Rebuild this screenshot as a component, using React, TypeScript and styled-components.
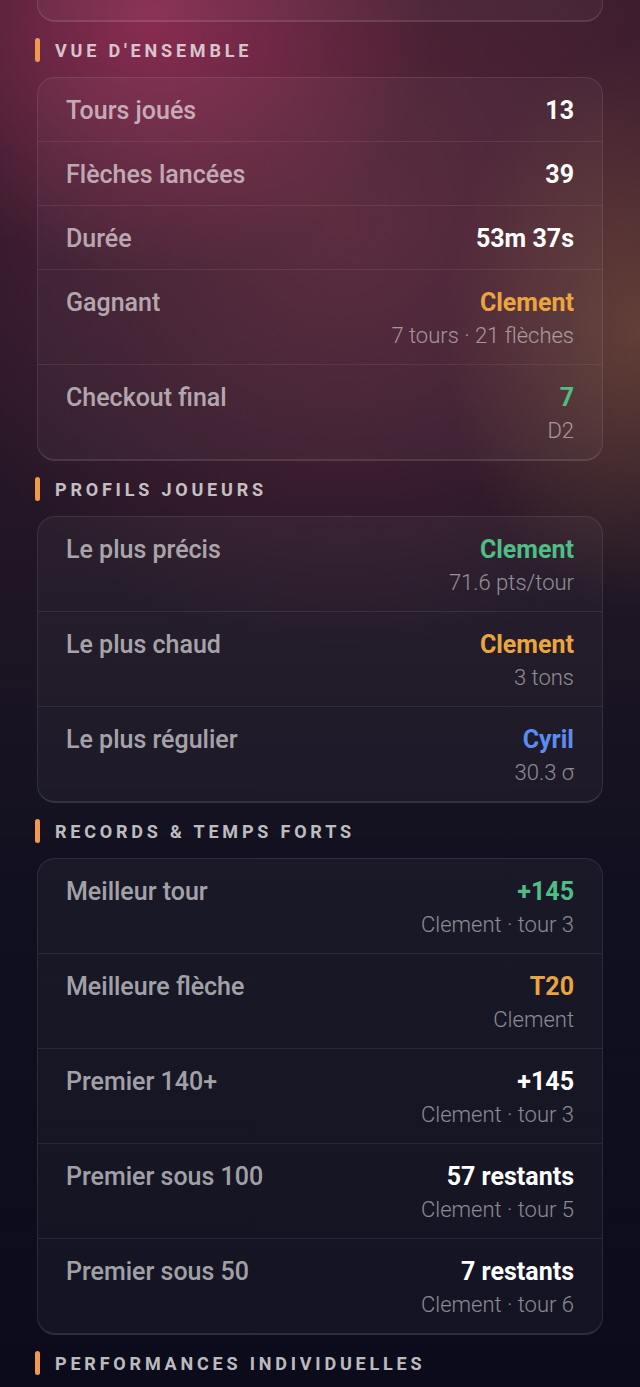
import React from "react";
import styled, { createGlobalStyle } from "styled-components";

const GlobalStyle = createGlobalStyle`
  html, body {
    margin: 0;
    padding: 0;
  }
  body {
    font-family: Roboto, "Noto Sans", "Liberation Sans", sans-serif;
    background-color: #0d0c1c;
    min-height: 1387px;
    background-image:
      radial-gradient(ellipse 380px 340px at 150px 20px, rgba(155, 48, 90, 0.78), rgba(155, 48, 90, 0) 75%),
      radial-gradient(ellipse 260px 380px at 640px 330px, rgba(140, 98, 64, 0.5), rgba(140, 98, 64, 0) 75%),
      radial-gradient(ellipse 560px 580px at 340px 220px, rgba(100, 42, 62, 0.75), rgba(100, 42, 62, 0) 75%),
      linear-gradient(180deg, #3a1c2e 0px, #2c1829 380px, #1b1423 650px, #111020 900px, #0c0b1b 1387px);
    background-repeat: no-repeat;
  }
`;

const Page = styled.div`
  padding: 0 37px 40px;
  display: flex;
  flex-direction: column;
`;

const Card = styled.div`
  border: 1px solid rgba(255, 255, 255, 0.09);
  border-bottom: 2px solid rgba(255, 255, 255, 0.1);
  border-radius: 18px;
  background: rgba(255, 255, 255, 0.035);
  display: flex;
  flex-direction: column;
  overflow: hidden;
`;

const TopCard = styled(Card)`
  height: 60px;
  margin-top: -41px;
`;

const Section = styled.section`
  margin-top: 16px;
  display: flex;
  flex-direction: column;
  gap: 15px;
`;

const Header = styled.div`
  display: flex;
  align-items: center;
  gap: 15px;
  height: 24px;
  margin-left: -2px;
`;

const Bar = styled.span`
  width: 5px;
  height: 24px;
  border-radius: 3px;
  background: #f09a4e;
`;

const HeaderText = styled.h2`
  margin: 0;
  font-size: 18px;
  font-weight: 700;
  letter-spacing: 3.8px;
  color: rgba(255, 255, 255, 0.74);
  text-transform: uppercase;
`;

const Row = styled.div`
  display: flex;
  justify-content: space-between;
  align-items: flex-start;
  padding: 20px 28px 17px 28px;
  & + & {
    border-top: 1px solid rgba(255, 255, 255, 0.08);
  }
`;

const Label = styled.span`
  font-size: 25px;
  line-height: 26px;
  font-weight: 500;
  color: rgba(255, 255, 255, 0.62);
`;

const ValueCol = styled.div`
  display: flex;
  flex-direction: column;
  align-items: flex-end;
  gap: 9px;
`;

const Value = styled.span<{ $tone?: string }>`
  font-size: 25px;
  line-height: 26px;
  font-weight: 700;
  color: ${(p) => p.$tone ?? "#ffffff"};
`;

const Sub = styled.span`
  font-size: 22px;
  line-height: 22px;
  font-weight: 300;
  color: rgba(255, 255, 255, 0.5);
`;

const ORANGE = "#eaa540";
const GREEN = "#4fbd86";
const BLUE = "#5b8cf0";

type Item = { label: string; value: string; tone?: string; sub?: string };

const sections: { title: string; items: Item[] }[] = [
  {
    title: "Vue d'ensemble",
    items: [
      { label: "Tours joués", value: "13" },
      { label: "Flèches lancées", value: "39" },
      { label: "Durée", value: "53m 37s" },
      { label: "Gagnant", value: "Clement", tone: ORANGE, sub: "7 tours · 21 flèches" },
      { label: "Checkout final", value: "7", tone: GREEN, sub: "D2" },
    ],
  },
  {
    title: "Profils joueurs",
    items: [
      { label: "Le plus précis", value: "Clement", tone: GREEN, sub: "71.6 pts/tour" },
      { label: "Le plus chaud", value: "Clement", tone: ORANGE, sub: "3 tons" },
      { label: "Le plus régulier", value: "Cyril", tone: BLUE, sub: "30.3 σ" },
    ],
  },
  {
    title: "Records & temps forts",
    items: [
      { label: "Meilleur tour", value: "+145", tone: GREEN, sub: "Clement · tour 3" },
      { label: "Meilleure flèche", value: "T20", tone: ORANGE, sub: "Clement" },
      { label: "Premier 140+", value: "+145", sub: "Clement · tour 3" },
      { label: "Premier sous 100", value: "57 restants", sub: "Clement · tour 5" },
      { label: "Premier sous 50", value: "7 restants", sub: "Clement · tour 6" },
    ],
  },
];

export default function App() {
  return (
    <>
      <GlobalStyle />
      <Page>
        <TopCard />
        {sections.map((s) => (
          <Section key={s.title}>
            <Header>
              <Bar />
              <HeaderText>{s.title}</HeaderText>
            </Header>
            <Card>
              {s.items.map((it) => (
                <Row key={it.label}>
                  <Label>{it.label}</Label>
                  <ValueCol>
                    <Value $tone={it.tone}>{it.value}</Value>
                    {it.sub && <Sub>{it.sub}</Sub>}
                  </ValueCol>
                </Row>
              ))}
            </Card>
          </Section>
        ))}
        <Section>
          <Header>
            <Bar />
            <HeaderText>Performances individuelles</HeaderText>
          </Header>
        </Section>
      </Page>
    </>
  );
}
